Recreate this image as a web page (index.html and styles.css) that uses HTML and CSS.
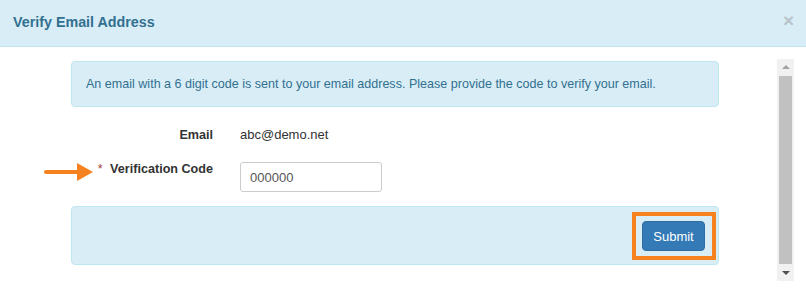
FILE: index.html
```html
<!DOCTYPE html>
<html>
<head>
<meta charset="utf-8">
<link rel="stylesheet" href="styles.css">
</head>
<body>
<div class="modal">
  <div class="modal-header">
    <h4 class="modal-title">Verify Email Address</h4>
    <span class="close">×</span>
  </div>
  <div class="modal-body">
    <div class="main">
      <div class="alert">An email with a 6 digit code is sent to your email address. Please provide the code to verify your email.</div>
      <div class="row row-email">
        <div class="label">Email</div>
        <div class="value">abc@demo.net</div>
      </div>
      <div class="row row-code">
        <svg class="arrow" width="50" height="20" viewBox="0 0 50 20">
          <line x1="2" y1="10" x2="36" y2="10" stroke="#f5821f" stroke-width="4" stroke-linecap="round"/>
          <polygon points="33,1 49,10 33,19" fill="#f5821f"/>
        </svg>
        <div class="label label-pad"><span class="req">*</span> Verification Code</div>
        <div class="value"><input class="input" type="text" value="000000"></div>
      </div>
      <div class="footer">
        <div class="btn-wrap">
          <button class="btn">Submit</button>
          <span class="highlight"></span>
        </div>
      </div>
    </div>
    <div class="scrollbar">
      <div class="sb-up"></div>
      <div class="sb-thumb"></div>
      <div class="sb-down"></div>
    </div>
  </div>
</div>
</body>
</html>
```
FILE: styles.css
```css
html, body {
  margin: 0;
  padding: 0;
  background: #fff;
}
body {
  font-family: "Liberation Sans", Arial, sans-serif;
  font-size: 13px;
  color: #333;
}
.modal {
  width: 806px;
  height: 300px;
  overflow: hidden;
}
.modal-header {
  height: 46px;
  background: #d9edf7;
  border-bottom: 1px solid #bfe3ef;
  display: flex;
  align-items: center;
  justify-content: space-between;
  padding: 0 13px;
}
.modal-title {
  margin: 0;
  font-size: 14.3px;
  font-weight: bold;
  color: #31708f;
  position: relative;
  top: -1px;
}
.close {
  font-size: 19px;
  font-weight: bold;
  color: #b8c4c9;
  line-height: 1;
  margin-right: -1px;
  position: relative;
  top: -3px;
}
.modal-body {
  display: flex;
  align-items: flex-start;
  padding-top: 14px;
}
.main {
  margin-left: 71px;
  width: 648px;
}
.alert {
  height: 44px;
  line-height: 44px;
  padding: 0 14px;
  background: #d9edf7;
  border: 1px solid #bce8f1;
  border-radius: 4px;
  color: #31708f;
  font-size: 12.55px;
}
.row {
  display: flex;
  align-items: flex-start;
  position: relative;
}
.row-email {
  margin-top: 19px;
  line-height: 18px;
}
.row-code {
  margin-top: 18px;
}
.label {
  width: 142px;
  text-align: right;
  font-weight: bold;
  color: #333;
  font-size: 12.6px;
}
.label-pad {
  padding-top: 1px;
  line-height: 12px;
}
.req {
  color: #a94442;
  font-weight: normal;
  margin-right: 4px;
}
.value {
  margin-left: 27px;
}
.input {
  box-sizing: border-box;
  width: 142px;
  height: 30px;
  border: 1px solid #ccc;
  border-radius: 3px;
  padding: 0 9px;
  font-family: "Liberation Sans", Arial, sans-serif;
  font-size: 13px;
  color: #555;
  margin: 0;
  outline: none;
}
.arrow {
  position: absolute;
  left: -27px;
  top: 0px;
}
.footer {
  margin-top: 14px;
  background: #d9edf7;
  border: 1px solid #bce8f1;
  border-radius: 4px;
  display: flex;
  justify-content: flex-end;
  align-items: flex-start;
  padding: 14px 13px 0 0;
  box-sizing: content-box;
  height: 43px;
}
.btn-wrap {
  position: relative;
}
.btn {
  display: block;
  height: 30px;
  width: 63px;
  background: #337ab7;
  border: 1px solid #2e6da4;
  border-radius: 4px;
  color: #fff;
  font-family: "Liberation Sans", Arial, sans-serif;
  font-size: 13px;
  padding: 0;
}
.highlight {
  position: absolute;
  left: -10px;
  top: -9px;
  right: -11px;
  bottom: -9px;
  border: 4px solid #f5821f;
}
.scrollbar {
  margin-left: 58px;
  margin-top: -2px;
  width: 17px;
  height: 222px;
  background: #f1f1f1;
  display: flex;
  flex-direction: column;
  align-items: center;
}
.sb-up, .sb-down {
  height: 17px;
  width: 17px;
  position: relative;
}
.sb-up::after {
  content: "";
  position: absolute;
  left: 5px;
  top: 6px;
  border-left: 4px solid transparent;
  border-right: 4px solid transparent;
  border-bottom: 4px solid #a3a3a3;
}
.sb-down::after {
  content: "";
  position: absolute;
  left: 5px;
  top: 7px;
  border-left: 4px solid transparent;
  border-right: 4px solid transparent;
  border-top: 4px solid #505050;
}
.sb-thumb {
  flex: 1;
  width: 13px;
  background: #c1c1c1;
}
```
